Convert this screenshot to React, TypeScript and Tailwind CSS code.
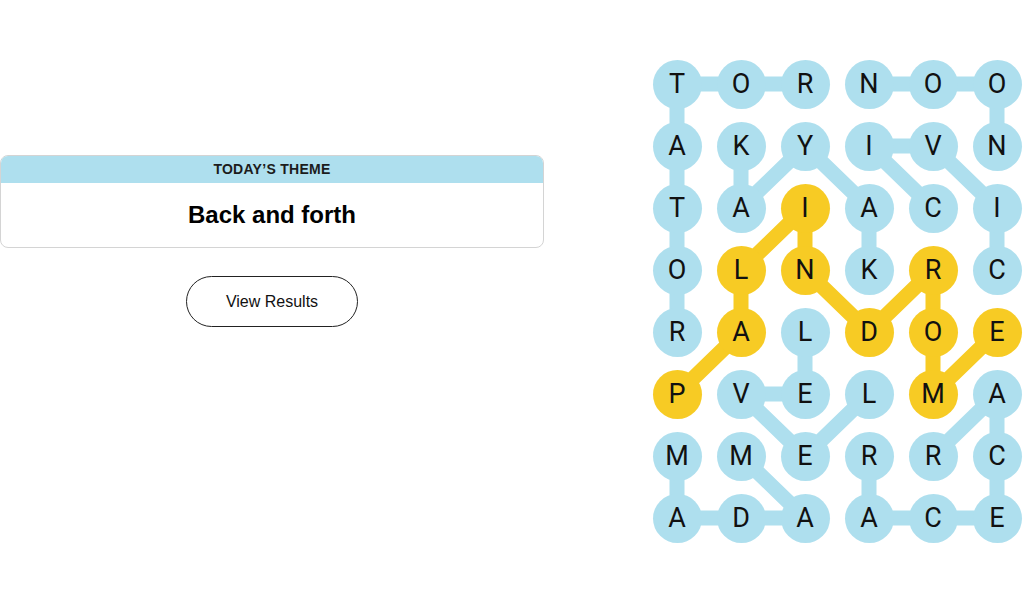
import React from "react";

const BLUE = "#aedfee";
const YELLOW = "#f7cb24";

const grid = [
  "TORNOO",
  "AKYIVN",
  "TAIACI",
  "OLNKRC",
  "RALDOE",
  "PVELMA",
  "MMERRC",
  "ADAACE",
];

type P = [number, number];

const blueWords: P[][] = [
  [[4, 0], [3, 0], [2, 0], [1, 0], [0, 0], [0, 1], [0, 2]],
  [[0, 3], [0, 4], [0, 5], [1, 5]],
  [[1, 1], [2, 1], [1, 2], [2, 3], [3, 3]],
  [[2, 4], [1, 3], [1, 4], [2, 5], [3, 5]],
  [[4, 2], [5, 2], [5, 1], [6, 2], [5, 3]],
  [[6, 0], [7, 0], [7, 1], [7, 2], [6, 1]],
  [[6, 3], [7, 3], [7, 4], [7, 5], [6, 5], [5, 5], [6, 4]],
];

const spangram: P[] = [
  [5, 0], [4, 1], [3, 1], [2, 2], [3, 2], [4, 3], [3, 4], [4, 4], [5, 4], [4, 5],
];

const cx = (c: number) => 32 + 64 * c;
const cy = (r: number) => 31 + 62 * r;

const yellowSet = new Set(spangram.map(([r, c]) => `${r}-${c}`));

function Path({ pts, color }: { pts: P[]; color: string }) {
  const d = pts.map(([r, c], i) => `${i === 0 ? "M" : "L"}${cx(c)} ${cy(r)}`).join(" ");
  return <path d={d} stroke={color} strokeWidth={15} fill="none" strokeLinejoin="round" strokeLinecap="round" />;
}

export default function App() {
  return (
    <div
      className="w-[1024px] h-[589px] bg-white flex overflow-hidden"
      style={{ fontFamily: '"Liberation Sans", Arial, sans-serif' }}
    >
      <div className="w-[544px] shrink-0 pt-[155px] flex flex-col items-center">
        <div className="w-full rounded-lg border border-[#d4d4d4] overflow-hidden bg-white">
          <div className="h-[27px] bg-[#aedfee] flex items-center justify-center text-[14px] font-bold tracking-[0.02em] text-[#1c1c1c]">
            TODAY’S THEME
          </div>
          <div className="h-[64px] flex items-center justify-center text-[24px] font-bold text-black">
            Back and forth
          </div>
        </div>
        <button className="mt-[28px] w-[172px] h-[51px] rounded-full border border-[#222] bg-white text-[16px] text-[#111] flex items-center justify-center">
          View Results
        </button>
      </div>
      <div className="ml-[101px] mt-[53px] relative w-[384px] h-[496px] shrink-0">
        <svg className="absolute inset-0" width="384" height="496">
          {blueWords.map((w, i) => (
            <Path key={i} pts={w} color={BLUE} />
          ))}
          <Path pts={spangram} color={YELLOW} />
        </svg>
        <div
          className="relative grid grid-cols-6 grid-rows-8 w-full h-full"
          style={{ fontFamily: "Roboto, 'Liberation Sans', sans-serif" }}
        >
          {grid.flatMap((row, r) =>
            row.split("").map((ch, c) => (
              <div key={`${r}-${c}`} className="flex items-center justify-center">
                <div
                  className={`w-[49px] h-[49px] rounded-full flex items-center justify-center text-[27px] text-[#111] ${
                    yellowSet.has(`${r}-${c}`) ? "bg-[#f7cb24]" : "bg-[#aedfee]"
                  }`}
                >
                  {ch}
                </div>
              </div>
            ))
          )}
        </div>
      </div>
    </div>
  );
}
